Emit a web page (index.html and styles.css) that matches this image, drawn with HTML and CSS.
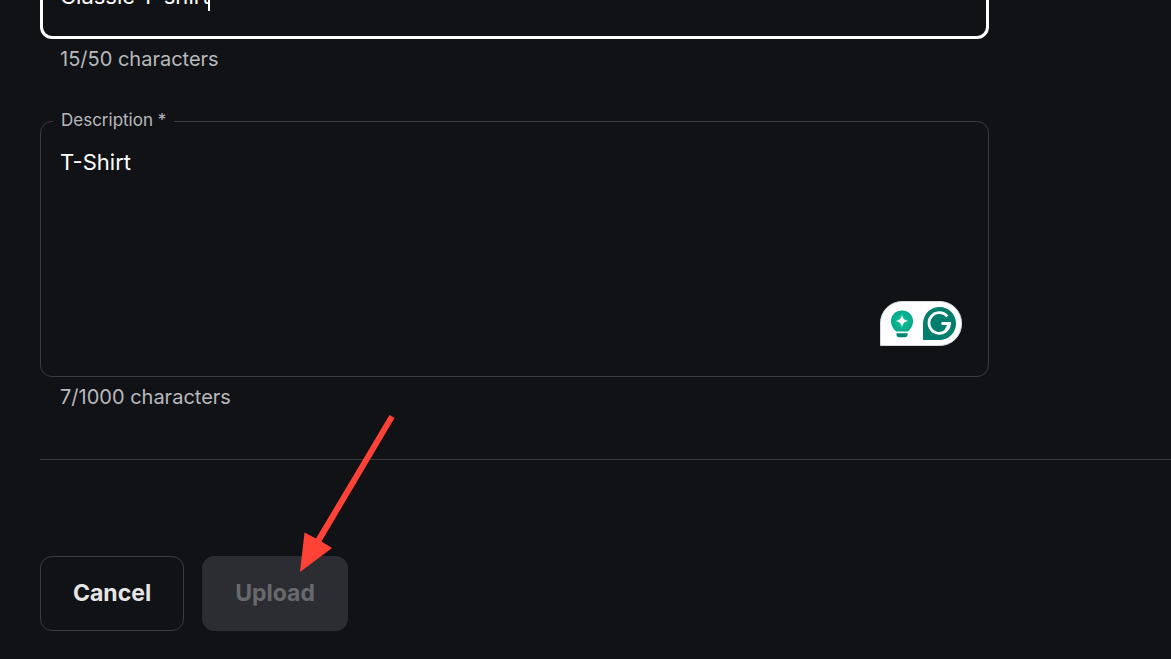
FILE: index.html
```
<!DOCTYPE html>
<html lang="en">
<head>
  <meta charset="UTF-8">
  <title>Upload Asset</title>
  <link rel="stylesheet" href="styles.css">
</head>
<body>

  <form class="upload-form">
    <div class="fields">
      <div class="field title-field">
        <div class="input-wrap">
          <input type="text" id="title" aria-label="Title" value="Classic T-shirt">
          <span class="caret"></span>
        </div>
        <p class="helper">15/50 characters</p>
      </div>

      <div class="field">
        <div class="input-wrap">
          <label for="description">Description *</label>
          <textarea id="description">T-Shirt</textarea>
          <div class="assistant">
            <svg width="24" height="28" viewBox="0 0 24 28">
              <defs>
                <radialGradient id="bulb" cx="0.5" cy="0.5" r="0.6">
                  <stop offset="0" stop-color="#15c39a"/>
                  <stop offset="1" stop-color="#00a386"/>
                </radialGradient>
              </defs>
              <path fill="url(#bulb)" d="M12 0.5C5.700.5 1 5.200 1 11.200c0 4.300 2 7.800 5.300 10.300h11.400c3.300-2.500 5.300-6 5.300-10.300C23 5.200 18.300.5 12 .5z"/>
              <path fill="#fff" d="M12 4.500c.8 4.200 2.300 5.700 6.500 6.500-4.200.8-5.700 2.300-6.500 6.500-.8-4.200-2.300-5.700-6.500-6.500 4.200-.8 5.700-2.300 6.500-6.500z"/>
              <path fill="#008573" d="M6.500 23.200h11v1.300c0 1.700-1 2.700-2.700 2.700H9.200c-1.700 0-2.700-1-2.700-2.700z"/>
            </svg>
            <svg width="33" height="33" viewBox="0 0 33 33">
              <path fill="#027e6f" d="M16.500 0A16.500 16.500 0 0 1 16.500 33H0V16.500A16.500 16.500 0 0 1 16.500 0z"/>
              <path fill="none" stroke="#fff" stroke-width="2.800" d="M24.300 9.500A10.300 10.300 0 1 0 26.600 16.500M18.500 16.500h9.500M26.600 16.500l-3.800 6.800"/>
            </svg>
          </div>
        </div>
        <p class="helper">7/1000 characters</p>
      </div>
    </div>

    <hr>

    <div class="actions">
      <button type="button" class="cancel-button">Cancel</button>
      <button type="submit" class="upload-button" disabled>Upload</button>
      <svg class="arrow" width="96" height="158" viewBox="0 0 96 158">
        <path fill="#ff4136" d="M90.500 0l5 3L22.500 126.500 33 133 1 157 5.500 117.500l11.500 6z"/>
      </svg>
    </div>
  </form>

</body>
</html>
```
FILE: styles.css
```
* {
  box-sizing: border-box;
  margin: 0;
  padding: 0;
}

body {
  font-family: Inter, 'Liberation Sans', sans-serif;
  background: #111216;
  color: #f7f7f8;
  overflow: hidden;
}

.upload-form {
  padding-left: 40px;
}

.fields {
  width: 84%;
  max-width: 949px;
}

/* the page is scrolled down, so the first field is cut off at the top */
.title-field {
  margin-top: -36px;
  margin-bottom: 48px;
}

.input-wrap {
  position: relative;
}

input,
textarea {
  display: block;
  width: 100%;
  font-family: inherit;
  font-size: 22px;
  line-height: 32px;
  color: #fff;
  background: transparent;
  border-radius: 12px;
  outline: none;
  resize: none;
}

input {
  height: 75px;
  padding: 0 17px 12px;
  border: 3px solid #fff;
}

textarea {
  height: 256px;
  padding: 24px 19px;
  border: 1px solid #3a3b40;
}

.caret {
  position: absolute;
  left: 168px;
  top: 20px;
  width: 2px;
  height: 27px;
  background: #fff;
}

label {
  position: absolute;
  left: 13px;
  top: -14px;
  padding: 0 8px;
  font-size: 17px;
  line-height: 26px;
  color: #b8b9bc;
  background: #111216;
}

.helper {
  padding: 6px 20px 0;
  font-size: 20px;
  line-height: 28px;
  color: #b8b9bc;
}

.assistant {
  position: absolute;
  right: 27px;
  bottom: 31px;
  display: flex;
  align-items: center;
  gap: 9px;
  height: 45px;
  padding: 0 5px 0 9px;
  background: #fff;
  border: 1px solid #d5d7e3;
  border-radius: 22px 22px 22px 0;
}

hr {
  margin-top: 48px;
  border: none;
  border-top: 1px solid #37383c;
}

.actions {
  position: relative;
  display: flex;
  gap: 18px;
  margin-top: 96px;
}

button {
  height: 75px;
  padding: 0 32px 2px;
  font-family: inherit;
  font-size: 23px;
  font-weight: 700;
  border-radius: 12px;
}

.cancel-button {
  color: #e5e5e6;
  background: transparent;
  border: 1px solid #3a3b40;
}

.upload-button {
  color: #68696d;
  background: #2c2d32;
  border: 1px solid #2c2d32;
}

.arrow {
  position: absolute;
  left: 259px;
  top: -141px;
}
```
